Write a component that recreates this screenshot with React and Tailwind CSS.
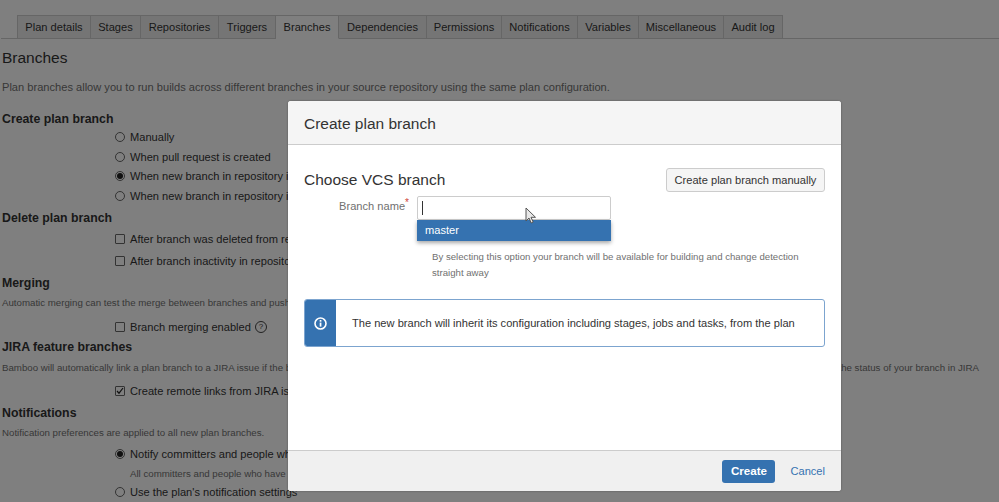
import React from "react";

const tabs = [
  ["Plan details", "w-[74px]"],
  ["Stages", "w-[50px]"],
  ["Repositories", "w-[78px]"],
  ["Triggers", "w-[57px]"],
  ["Branches", "w-[63px]"],
  ["Dependencies", "w-[88px]"],
  ["Permissions", "w-[75px]"],
  ["Notifications", "w-[76px]"],
  ["Variables", "w-[61px]"],
  ["Miscellaneous", "w-[85px]"],
  ["Audit log", "w-[59px]"],
];

const Radio = ({ checked }) => (
  <span className="w-[10px] h-[10px] shrink-0 rounded-full border border-[#666] bg-white flex items-center justify-center">
    {checked && <span className="w-[6px] h-[6px] rounded-full bg-[#222]"></span>}
  </span>
);

const Checkbox = ({ checked }) => (
  <span className="w-[10px] h-[10px] shrink-0 rounded-[1px] border border-[#666] bg-white flex items-center justify-center">
    {checked && (
      <svg width="8" height="8" viewBox="0 0 8 8" fill="none" stroke="#222" strokeWidth="1.2">
        <path d="M1 4l2 2.2L7 1" />
      </svg>
    )}
  </span>
);

const Option = ({ mark, className, children }) => (
  <div className={`flex items-center gap-[5px] pl-[113px] h-[16px] text-[11.1px] text-[#333] whitespace-nowrap ${className}`}>
    {mark}
    <span>{children}</span>
  </div>
);

const Heading = ({ className, children }) => (
  <h3 className={`h-[16px] leading-[16px] text-[12.3px] font-bold text-[#333] ${className}`}>{children}</h3>
);

const Note = ({ className, children }) => (
  <p className={`h-[14px] leading-[14px] text-[9.7px] text-[#707070] whitespace-nowrap ${className}`}>{children}</p>
);

const App = () => {
  return (
    <div className="relative w-[999px] h-[502px] overflow-hidden bg-white font-['Liberation_Sans',Arial,sans-serif]">
      {/* page behind the dialog */}
      <div className="h-[502px] pl-[2px] overflow-hidden">
        <div className="flex -ml-[1px] pl-[16px] pt-[15px] h-[39px] border-b border-[#ccc]">
          {tabs.map(([name, width]) => (
            <div
              key={name}
              className={`${width} h-[24px] flex items-center justify-center text-[11.1px] border border-[#ccc] border-l-0 first:border-l text-[#333] ${
                name === "Branches" ? "bg-white border-b-white" : "bg-[#ebebeb]"
              }`}
            >
              {name}
            </div>
          ))}
        </div>
        <h2 className="mt-[8px] h-[22px] leading-[22px] text-[15.5px] text-[#333]">Branches</h2>
        <p className="mt-[10px] h-[16px] leading-[16px] text-[11.1px] text-[#707070] whitespace-nowrap">
          Plan branches allow you to run builds across different branches in your source repository using the same plan configuration.
        </p>
        <Heading className="mt-[16px]">Create plan branch</Heading>
        <Option className="mt-[2px]" mark={<Radio />}>Manually</Option>
        <Option className="mt-[4px]" mark={<Radio />}>When pull request is created</Option>
        <Option className="mt-[3px]" mark={<Radio checked />}>When new branch in repository is</Option>
        <Option className="mt-[4px]" mark={<Radio />}>When new branch in repository is</Option>
        <Heading className="mt-[6px]">Delete plan branch</Heading>
        <Option className="mt-[5px]" mark={<Checkbox />}>After branch was deleted from repository</Option>
        <Option className="mt-[6px]" mark={<Checkbox />}>After branch inactivity in repository</Option>
        <Heading className="mt-[6px]">Merging</Heading>
        <Note className="mt-[5px]">Automatic merging can test the merge between branches and push</Note>
        <Option className="mt-[9px]" mark={<Checkbox />}>
          <span className="inline-flex items-center gap-[4px]">
            Branch merging enabled
            <span className="w-[12px] h-[12px] rounded-full border border-[#444] flex items-center justify-center text-[8px] leading-none">?</span>
          </span>
        </Option>
        <Heading className="mt-[4px]">JIRA feature branches</Heading>
        <div className="mt-[6px] w-[977px] flex justify-between">
          <Note>Bamboo will automatically link a plan branch to a JIRA issue if the branch</Note>
          <Note>the status of your branch in JIRA</Note>
        </div>
        <Option className="mt-[8px]" mark={<Checkbox checked />}>Create remote links from JIRA issues</Option>
        <Heading className="mt-[6px]">Notifications</Heading>
        <Note className="mt-[5px]">Notification preferences are applied to all new plan branches.</Note>
        <Option className="mt-[6px]" mark={<Radio checked />}>Notify committers and people who</Option>
        <p className="mt-[5px] h-[14px] pl-[128px] leading-[14px] text-[9.7px] text-[#707070] whitespace-nowrap">
          All committers and people who have
        </p>
        <Option className="mt-[3px]" mark={<Radio />}>Use the plan's notification settings</Option>
      </div>

      {/* dimmed backdrop */}
      <div className="absolute inset-0 bg-black/50"></div>

      {/* dialog */}
      <div className="absolute left-[288px] top-[101px] w-[553px] h-[390px] bg-white rounded-[3px] flex flex-col overflow-hidden shadow-[0_0_2px_rgba(0,0,0,0.4)]">
        <div className="h-[44px] shrink-0 flex items-center px-[16px] pt-[2px] bg-[#f5f5f5] border-b border-[#ccc] text-[15.5px] text-[#333]">
          Create plan branch
        </div>

        <div className="flex-1 px-[16px] pt-[23px]">
          <div className="flex items-center justify-between">
            <h2 className="text-[15.5px] text-[#333] leading-[22px]">Choose VCS branch</h2>
            <button className="w-[159px] h-[24px] bg-[#f5f5f5] border border-[#ccc] rounded-[3px] text-[11.1px] text-[#333]">
              Create plan branch manually
            </button>
          </div>
          <div className="flex mt-[4px]">
            <label className="w-[105px] text-right text-[11.1px] text-[#707070] pt-[2px] whitespace-nowrap">
              Branch name<span className="text-[#d04437] text-[10px] align-top leading-none">*</span>
            </label>
            <div className="relative ml-[8px] w-[194px]">
              <div className="h-[24px] border border-[#ccc] rounded-[2px] bg-white flex items-center pl-[4px]">
                <span className="w-[1px] h-[14px] bg-[#333]"></span>
              </div>
              <div className="absolute left-0 top-[24px] w-[194px] h-[21px] flex items-center pl-[8px] bg-[#3572b0] text-white text-[11.1px] shadow-[0_2px_4px_rgba(0,0,0,0.35)]">
                master
              </div>
              <svg className="absolute left-[108px] top-[11px]" width="12" height="17" viewBox="0 0 12 17">
                <path d="M1 1v13l3-3 2.2 5 2-1-2.2-4.7H10.5z" fill="#e8e8e8" stroke="#555" strokeWidth="1" />
              </svg>
            </div>
          </div>
          <p className="ml-[128px] mt-[29px] w-[390px] text-[9.65px] leading-[15.5px] text-[#707070]">
            By selecting this option your branch will be available for building and change detection straight away
          </p>
          <div className="mt-[19px] h-[48px] flex border border-[#7ca4cf] rounded-[3px] overflow-hidden">
            <div className="w-[31px] shrink-0 bg-[#3572b0] flex items-center justify-center">
              <svg width="13" height="13" viewBox="0 0 13 13" fill="none">
                <circle cx="6.5" cy="6.5" r="5.5" stroke="#fff" strokeWidth="1.6" />
                <rect x="5.7" y="5.6" width="1.7" height="4" fill="#fff" />
                <rect x="5.7" y="3" width="1.7" height="1.7" fill="#fff" />
              </svg>
            </div>
            <div className="flex items-center pl-[16px] text-[11.1px] text-[#333]">
              The new branch will inherit its configuration including stages, jobs and tasks, from the plan
            </div>
          </div>
        </div>

        <div className="h-[41px] shrink-0 flex items-center justify-end gap-[15px] pr-[16px] bg-[#f0f0f0] border-t border-[#ccc]">
          <button className="w-[53px] h-[23px] bg-[#3572b0] rounded-[3px] text-white font-bold text-[11.6px]">Create</button>
          <span className="text-[11.1px] text-[#3572b0]">Cancel</span>
        </div>
      </div>
    </div>
  );
};

export default App;
